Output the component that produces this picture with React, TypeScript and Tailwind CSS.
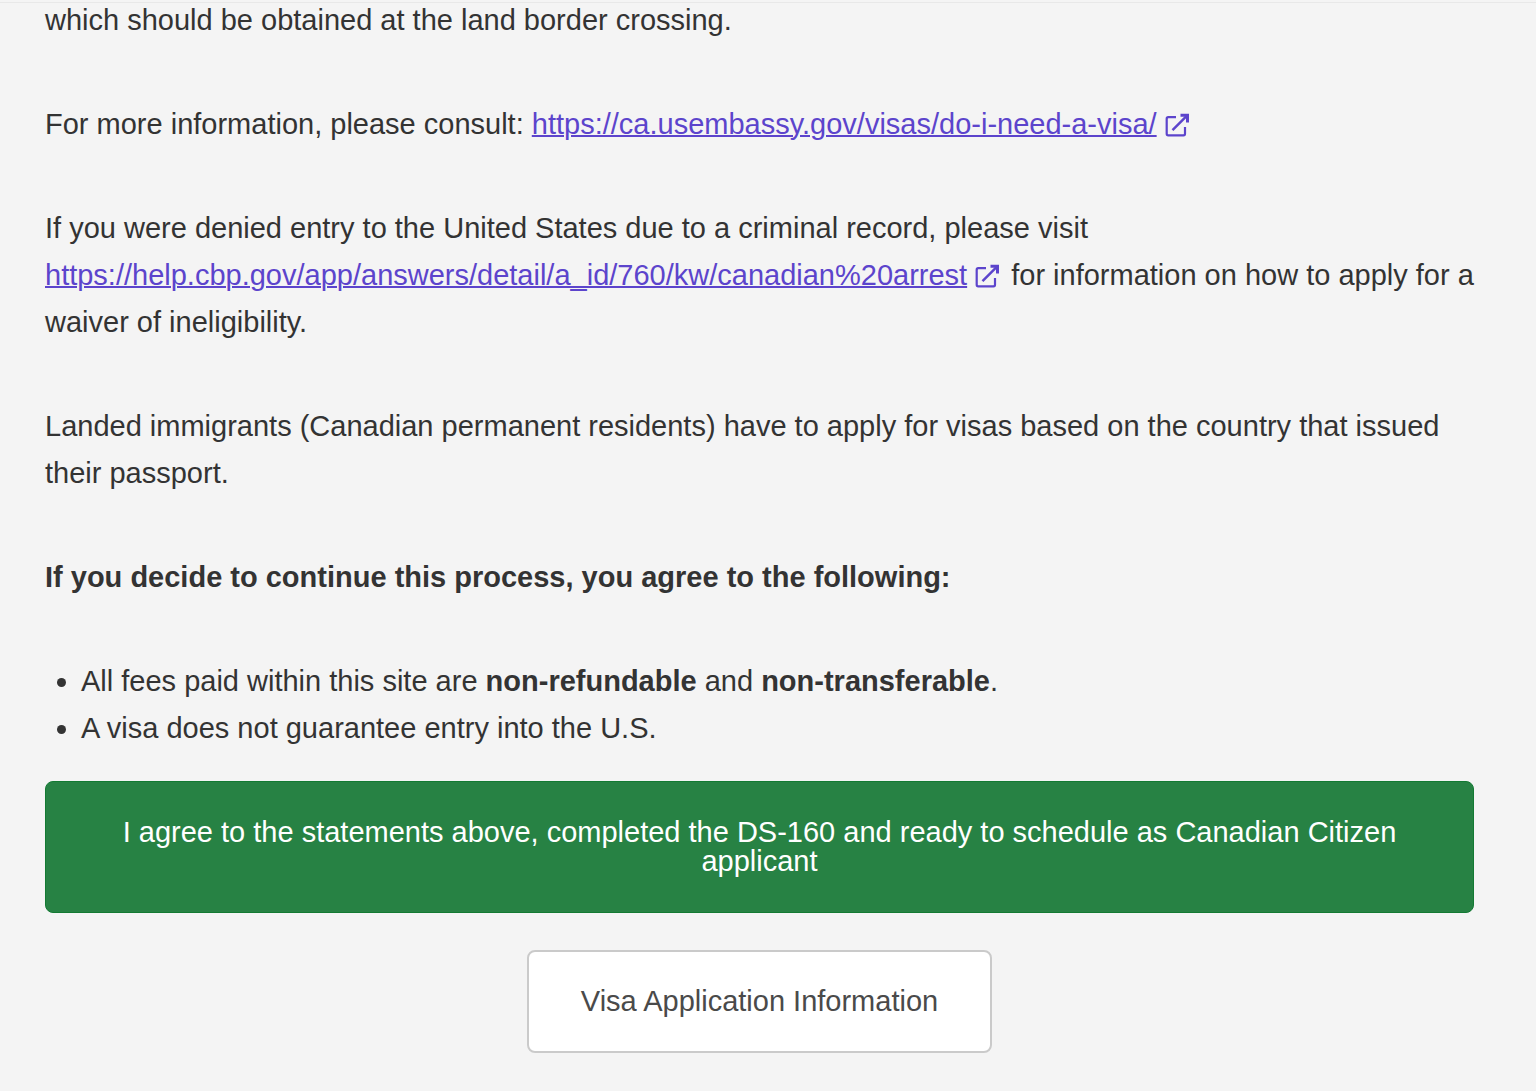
import type { ReactNode } from "react";

function ExternalIcon() {
  return (
    <svg viewBox="0 0 24 24" aria-hidden="true" className="inline-block size-6 ml-2 mr-1 align-[-3px] text-[#5c44cc]"
      fill="none" stroke="currentColor">
      <path d="M11 4.200H3.200Q1.700 4.200 1.700 5.700V20.800Q1.700 22.300 3.200 22.300H18.500Q20 22.300 20 20.800V14" strokeWidth="2.200" />
      <path d="M7.500 17.200L21.500 3.200" strokeWidth="2.400" />
      <path d="M15.500 2.200H22.500V9.500" strokeWidth="3" />
    </svg>
  );
}

function ExternalLink({ href, children }: { href: string; children: ReactNode }) {
  return (
    <a href={href} className="text-[#5c44cc]">
      <span className="underline decoration-2">{children}</span>
      <ExternalIcon />
    </a>
  );
}

export default function App() {
  return (
    <div className="min-h-screen overflow-hidden bg-[#f4f4f4] font-['Liberation_Sans',Arial,sans-serif] text-[29px] leading-[47px] text-[#333]">
      <div className="h-[3px] border-b border-[#e8e8e8]" />

      <main className="-mt-1.5 pl-[45px] pb-9">
        <div className="flex flex-col gap-[57px] pr-12">
          <p>which should be obtained at the land border crossing.</p>

          <p>
            For more information, please consult:{" "}
            <ExternalLink href="https://ca.usembassy.gov/visas/do-i-need-a-visa/">
              https://ca.usembassy.gov/visas/do-i-need-a-visa/
            </ExternalLink>
          </p>

          <p>
            If you were denied entry to the United States due to a criminal record, please visit{" "}
            <ExternalLink href="https://help.cbp.gov/app/answers/detail/a_id/760/kw/canadian%20arrest">
              https://help.cbp.gov/app/answers/detail/a_id/760/kw/canadian%20arrest
            </ExternalLink>{" "}
            for information on how to apply for a waiver of ineligibility.
          </p>

          <p>
            Landed immigrants (Canadian permanent residents) have to apply for visas based on the country that issued
            their passport.
          </p>

          <p className="font-bold">If you decide to continue this process, you agree to the following:</p>

          <ul className="list-disc pl-9">
            <li>
              All fees paid within this site are <strong>non-refundable</strong> and <strong>non-transferable</strong>.
            </li>
            <li>A visa does not guarantee entry into the U.S.</li>
          </ul>
        </div>

        <div className="mt-[29px] mr-[62px] flex flex-col items-center gap-[37px]">
          <button type="button"
            className="w-full rounded-lg border border-[#137a33] bg-[#278244] px-16 py-9 leading-[29px] text-white">
            I agree to the statements above, completed the DS-160 and ready to schedule as Canadian Citizen applicant
          </button>
          <button type="button"
            className="rounded-lg border-2 border-[#cacaca] bg-white px-[52px] py-[35px] leading-[29px] text-[#4a4a4a]">
            Visa Application Information
          </button>
        </div>
      </main>
    </div>
  );
}
